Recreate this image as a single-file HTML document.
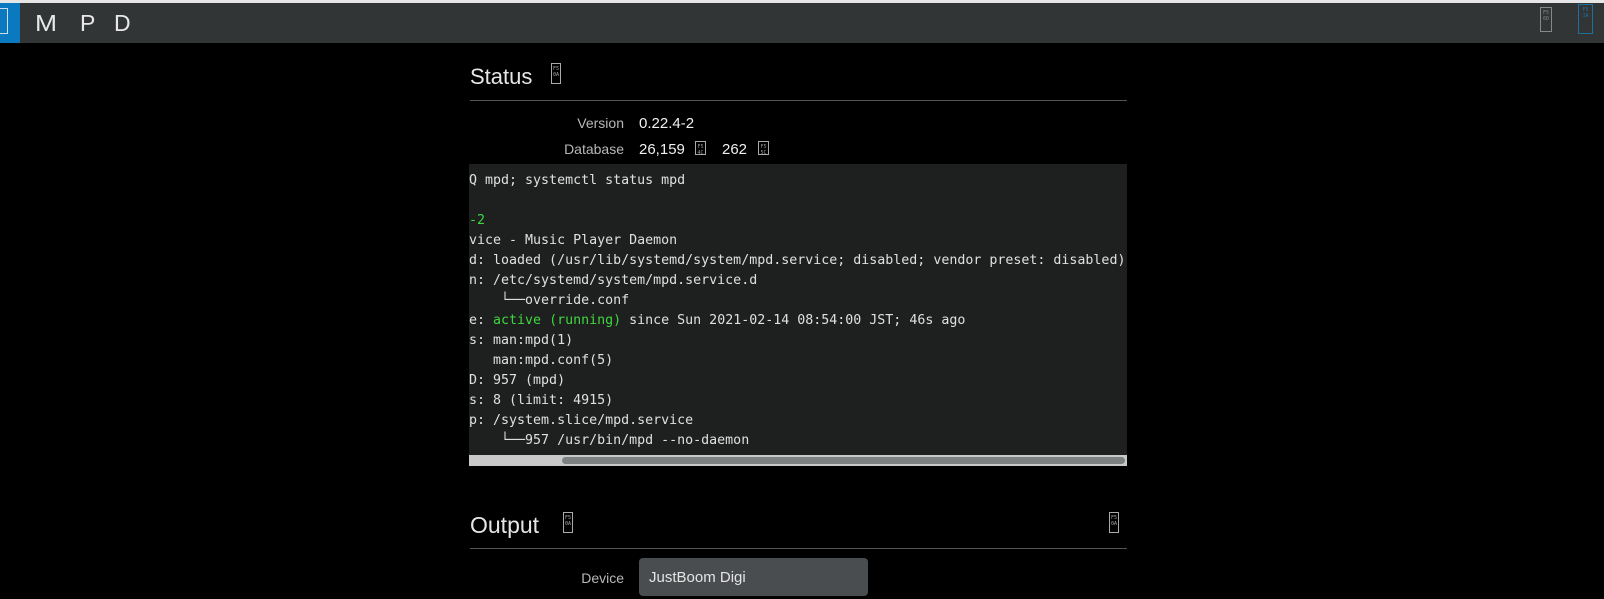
<!DOCTYPE html>
<html><head><meta charset="utf-8"><style>
*{margin:0;padding:0;box-sizing:border-box}
body{width:1604px;height:599px;background:#000;overflow:hidden;position:relative;font-family:"Liberation Sans",sans-serif;color:#ddd}
.a{position:absolute}
.ic{position:absolute;border:1px solid #999;font:5px/6px "DejaVu Sans Mono",monospace;color:#999;text-align:center;padding-top:2px;letter-spacing:0}
.lbl{position:absolute;font-size:14px;color:#b8b8b8;text-align:right;width:150px}
.val{position:absolute;font-size:15px;color:#f0f0f0}
pre{font:13.3px/20px "DejaVu Sans Mono",monospace;color:#e0e0e0;white-space:pre}
.g{color:#3ed83e}
</style></head><body>
<div class="a" style="left:0;top:0;width:1604px;height:3px;background:#e6e6e6"></div>
<div class="a" style="left:0;top:3px;width:1604px;height:40px;background:#323536"></div>
<div class="a" style="left:0;top:3px;width:20px;height:40px;background:#0a79c0"></div>
<div class="ic" style="left:-2px;top:8px;width:10px;height:26px;border-color:#cde"></div>
<div class="a" style="left:35px;top:10px;font-size:23px;color:#e8e8e8;transform:scaleX(1.15);transform-origin:left">M</div>
<div class="a" style="left:80px;top:10px;font-size:23px;color:#e8e8e8">P</div>
<div class="a" style="left:114px;top:10px;font-size:23px;color:#e8e8e8">D</div>
<div class="ic" style="left:1540px;top:7px;width:12px;height:25px;border-color:#888;color:#888">F5<br>6D</div>
<div class="ic" style="left:1578px;top:4px;width:15px;height:30px;border-color:#1e6fa0;color:#1e6fa0">F5<br>1A</div>

<div class="a" style="left:470px;top:64px;font-size:22px;color:#e6e6e6">Status</div>
<div class="ic" style="left:551px;top:63px;width:10px;height:21px;border-color:#aaa;color:#aaa">F5<br>0A</div>
<div class="a" style="left:470px;top:100px;width:657px;height:1px;background:#555"></div>
<div class="lbl" style="left:474px;top:115px">Version</div>
<div class="val" style="left:639px;top:115px">0.22.4-2</div>
<div class="lbl" style="left:474px;top:141px">Database</div>
<div class="val" style="left:639px;top:141px">26,159</div>
<div class="ic" style="left:695px;top:141px;width:11px;height:14px;border-color:#aaa">F5<br>4C</div>
<div class="val" style="left:722px;top:141px">262</div>
<div class="ic" style="left:758px;top:141px;width:11px;height:14px;border-color:#aaa">F5<br>5C</div>

<div class="a" style="left:469px;top:164px;width:658px;height:302px;background:#1e1f1f;overflow:hidden">
<pre class="a" style="left:-8px;top:7px">-Q mpd; systemctl status mpd

<span class="g">4-2</span>
 vice - Music Player Daemon
ed: loaded (/usr/lib/systemd/system/mpd.service; disabled; vendor preset: disabled)
In: /etc/systemd/system/mpd.service.d
     └──override.conf
ve: <span class="g">active (running)</span> since Sun 2021-02-14 08:54:00 JST; 46s ago
cs: man:mpd(1)
    man:mpd.conf(5)
ID: 957 (mpd)
ks: 8 (limit: 4915)
up: /system.slice/mpd.service
     └──957 /usr/bin/mpd --no-daemon</pre>
<div class="a" style="left:0;top:291px;width:658px;height:11px;background:#c9c9c9"></div>
<div class="a" style="left:93px;top:293px;width:563px;height:7px;border-radius:4px;background:#7e8181"></div>
</div>

<div class="a" style="left:470px;top:512px;font-size:23px;color:#e6e6e6">Output</div>
<div class="ic" style="left:563px;top:512px;width:10px;height:21px;border-color:#aaa;color:#aaa">F5<br>0A</div>
<div class="ic" style="left:1109px;top:512px;width:10px;height:21px;border-color:#aaa;color:#aaa">F5<br>0A</div>
<div class="a" style="left:470px;top:548px;width:657px;height:1px;background:#555"></div>
<div class="lbl" style="left:474px;top:570px">Device</div>
<div class="a" style="left:639px;top:558px;width:229px;height:38px;background:#4a4d4f;border-radius:4px"></div>
<div class="val" style="left:649px;top:569px;color:#e4e4e4">JustBoom Digi</div>
</body></html>
